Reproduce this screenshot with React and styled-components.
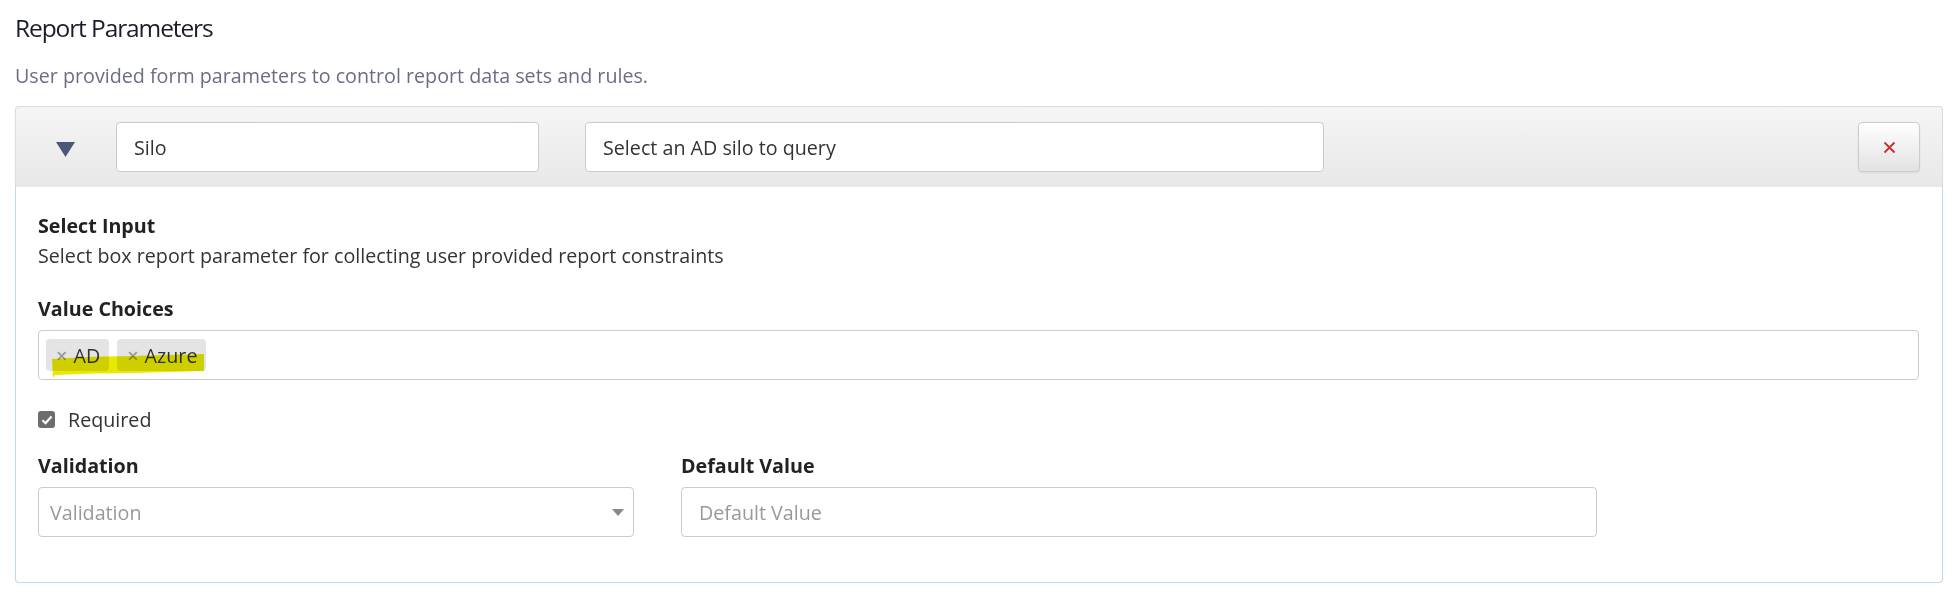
import styled, { createGlobalStyle } from 'styled-components';

const GlobalStyle = createGlobalStyle`
  body {
    margin: 0;
    background: #fff;
    font-family: "Open Sans", "Noto Sans", sans-serif;
    color: #222;
  }
`;

const App = () => {
  return (
    <Page>
      <GlobalStyle />
      <Title>Report Parameters</Title>
      <Subtitle>User provided form parameters to control report data sets and rules.</Subtitle>

      <Panel>
        <Header>
          <Toggle>
            <svg width="19" height="15" viewBox="0 0 19 15">
              <polygon points="0,0 19,0 9.5,15" fill="#4a5877" />
            </svg>
          </Toggle>
          <TextBox width="423px" value="Silo" readOnly />
          <TextBox width="739px" value="Select an AD silo to query" readOnly />
          <Spacer />
          <RemoveButton type="button">
            <svg width="13" height="13" viewBox="0 0 13 13">
              <path d="M1.5 1.5 L11.5 11.5 M11.5 1.5 L1.5 11.5" stroke="#c9302c" strokeWidth="1.8" />
            </svg>
          </RemoveButton>
        </Header>

        <Body>
          <Section>
            <Label>Select Input</Label>
            <Help>Select box report parameter for collecting user provided report constraints</Help>
          </Section>

          <Section>
            <Label>Value Choices</Label>
            <TagInput>
              <Tag>
                <TagX>×</TagX>AD
              </Tag>
              <Tag>
                <TagX>×</TagX>Azure
              </Tag>
              <Highlight width="154" height="26" viewBox="0 0 154 26">
                <path d="M1 25 L0 6 Q 40 3 80 3 L152 1 L152 18 L80 20 Q 40 20 3 22 Z" fill="#e8e800" />
              </Highlight>
            </TagInput>
          </Section>

          <CheckRow>
            <CheckBox>
              <svg width="12" height="10" viewBox="0 0 12 10">
                <path d="M1.5 5.2 L4.5 8.2 L10.5 1.5" stroke="#fff" strokeWidth="2.2" fill="none" />
              </svg>
            </CheckBox>
            Required
          </CheckRow>

          <FieldGrid>
            <Field>
              <Label>Validation</Label>
              <SelectBox>
                <Placeholder>Validation</Placeholder>
                <svg width="12" height="7" viewBox="0 0 12 7">
                  <polygon points="0,0 12,0 6,7" fill="#888" />
                </svg>
              </SelectBox>
            </Field>
            <Field>
              <Label>Default Value</Label>
              <TextBox width="916px" placeholder="Default Value" />
            </Field>
          </FieldGrid>
        </Body>
      </Panel>
    </Page>
  );
};

export default App;

const Page = styled.div`
  padding: 10px 11px 0 15px;
`;

const Title = styled.h3`
  margin: 0;
  font-size: 24.5px;
  font-weight: 400;
  letter-spacing: -1.1px;
  line-height: 36px;
  color: #1a1d29;
`;

const Subtitle = styled.p`
  margin: 17px 0 0;
  font-size: 19.7px;
  line-height: 26px;
  color: #6b6d85;
`;

const Panel = styled.div`
  margin-top: 17px;
  border-radius: 4px;
  box-shadow: 0 1px 2px rgba(0, 0, 0, 0.06);
`;

const Header = styled.div`
  display: flex;
  align-items: center;
  height: 80px;
  padding: 0 22px 0 40px;
  border: 1px solid #dcdcdc;
  border-bottom: none;
  border-radius: 4px 4px 0 0;
  background: linear-gradient(to bottom, #f5f5f5, #e8e8e8);

  & > input + input {
    margin-left: 46px;
  }
`;

const Toggle = styled.div`
  display: flex;
  align-items: center;
  width: 19px;
  margin-right: 41px;
  margin-top: 4px;
`;

const TextBox = styled.input`
  box-sizing: border-box;
  width: ${(p) => p.width};
  height: 50px;
  padding: 0 17px;
  border: 1px solid #ccc;
  border-radius: 4px;
  background: #fff;
  font-family: inherit;
  font-size: 19.7px;
  color: #333;
  outline: none;

  &::placeholder {
    color: #999;
  }
`;

const Spacer = styled.div`
  flex: 1;
`;

const RemoveButton = styled.button`
  display: flex;
  align-items: center;
  justify-content: center;
  width: 62px;
  height: 50px;
  padding: 0;
  border: 1px solid #ccc;
  border-radius: 4px;
  background: linear-gradient(to bottom, #fff, #e2e2e2);
  box-shadow: 0 1px 2px rgba(0, 0, 0, 0.08);
`;

const Body = styled.div`
  padding: 25px 23px 45px 22px;
  border: 1px solid #c3d9ee;
  border-top: none;
  border-radius: 0 0 4px 4px;
  background: #fff;
`;

const Section = styled.div`
  margin-bottom: 24px;
`;

const Label = styled.div`
  font-size: 19.7px;
  font-weight: 700;
  line-height: 28px;
  color: #222;
  margin-bottom: 7px;
`;

const Help = styled.div`
  font-size: 19.7px;
  line-height: 30px;
  color: #333;
  margin-top: -6px;
`;

const TagInput = styled.div`
  position: relative;
  display: flex;
  align-items: center;
  gap: 8px;
  box-sizing: border-box;
  height: 50px;
  padding: 0 7px;
  border: 1px solid #ccc;
  border-radius: 4px;
`;

const Tag = styled.span`
  display: inline-flex;
  align-items: center;
  height: 32px;
  padding: 0 9px 0 10px;
  border-radius: 4px;
  background: #e4e4e4;
  font-size: 19.7px;
  color: #333;
`;

const TagX = styled.span`
  font-size: 20px;
  font-weight: 600;
  color: #999;
  margin-right: 6px;
`;

const Highlight = styled.svg`
  position: absolute;
  left: 13px;
  top: 22px;
  mix-blend-mode: multiply;
  pointer-events: none;
`;

const CheckRow = styled.label`
  display: flex;
  align-items: center;
  gap: 13px;
  margin: 26px 0 19px;
  font-size: 19.7px;
  color: #333;
`;

const CheckBox = styled.span`
  display: inline-flex;
  align-items: center;
  justify-content: center;
  width: 17px;
  height: 17px;
  border-radius: 3px;
  background: #6d6d6d;
`;

const FieldGrid = styled.div`
  display: flex;
  gap: 47px;
`;

const Field = styled.div`
  display: flex;
  flex-direction: column;
`;

const SelectBox = styled.div`
  display: flex;
  align-items: center;
  justify-content: space-between;
  box-sizing: border-box;
  width: 596px;
  height: 50px;
  padding: 0 9px 0 11px;
  border: 1px solid #ccc;
  border-radius: 4px;
`;

const Placeholder = styled.span`
  font-size: 19.7px;
  color: #999;
`;
